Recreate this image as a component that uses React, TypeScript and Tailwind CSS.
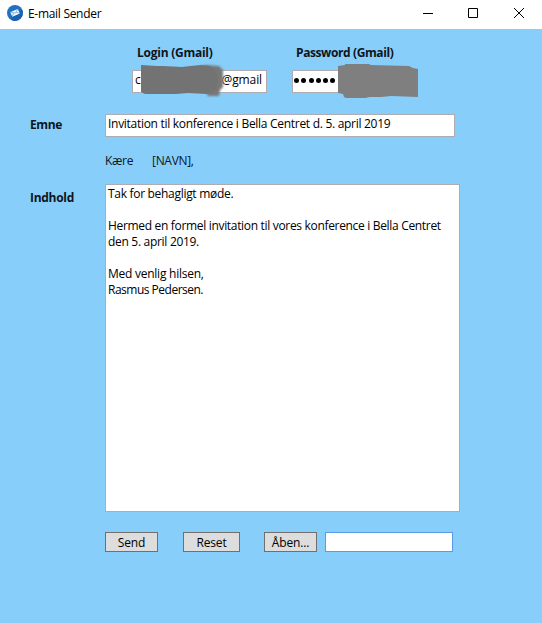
const body = [
  { text: 'Tak for behagligt møde.', spacing: 'tracking-[-0.3px]' },
  { text: '', spacing: '' },
  { text: 'Hermed en formel invitation til vores konference i Bella Centret', spacing: 'tracking-[-0.32px]' },
  { text: 'den 5. april 2019.', spacing: 'tracking-[-0.3px]' },
  { text: '', spacing: '' },
  { text: 'Med venlig hilsen,', spacing: 'tracking-[-0.25px]' },
  { text: 'Rasmus Pedersen.', spacing: 'tracking-[-0.5px]' },
];

function TitleBar() {
  return (
    <header className="flex h-[29px] items-start bg-white">
      <svg className="ml-[7px] mt-[5px] size-4" viewBox="0 0 16 16">
        <circle cx="8" cy="8" r="8" fill="#2272c3" />
        <path d="M15.2 5A8 8 0 0 1 6 15.700L3.500 11.500l9-6z" fill="#1b60ae" />
        <path d="m3.300 7.300 7.400-3.400 2.200 4.500-7.600 3.400z" fill="#f4f8fc" />
        <path d="m3.600 7.500 4.900.5 2.200-3.700M5.300 11.400l1.300-3.300M12.500 8.400 9.200 7.200" fill="none" stroke="#5d9bd5" strokeWidth=".7" />
      </svg>
      <h1 className="ml-[5px] mt-[6px] text-[12px] leading-4 tracking-[-0.3px] text-black">E-mail Sender</h1>
      <div className="ml-auto flex h-[29px]" aria-hidden="true">
        <svg width="119" height="29" viewBox="0 0 119 29" fill="none" stroke="#000" strokeWidth="1">
          <path d="M0 13.5h10M45.500 8.500h9v9h-9zM91 8l10 10M101 8 91 18" />
        </svg>
      </div>
    </header>
  );
}

function Credentials() {
  return (
    <div className="flex pl-[132px]">
      <div className="w-[160px]">
        <div className="ml-[5px] h-4 font-bold tracking-[-0.25px]">Login (Gmail)</div>
        <div className="relative mt-[9px] flex h-[23px] w-[135px] border border-[#abadb3] bg-white text-black">
          <span className="ml-[2px] mt-[1px]">c</span>
          <span className="ml-auto mr-[4px] mt-[1px] tracking-[-0.1px]">@gmail</span>
          <svg className="absolute left-[7px] top-[-8px]" width="92" height="38" viewBox="0 0 92 38">
            <defs>
              <filter id="soft" x="-20%" y="-20%" width="140%" height="140%">
                <feGaussianBlur stdDeviation="1.2" />
              </filter>
            </defs>
            <path d="M60 3 66 2 79 3 83 7 83 24 80 27 79 33 68 33 66 29 60 28Z" fill="#777" filter="url(#soft)" />
            <path d="M1 2 17 3 23 3 42 4 50 3 61 2 70 3 76 8 78 18 75 28 67 31 48 30 36 31 5 31 1 29Z" fill="#737373" />
          </svg>
        </div>
      </div>
      <div>
        <div className="ml-[4px] h-4 font-bold tracking-[-0.4px]">Password (Gmail)</div>
        <div className="relative mt-[9px] h-[23px] w-[120px] border border-[#abadb3] bg-white">
          <div className="flex gap-[2px] pl-[1px] pt-[7px]">
            {[0, 1, 2, 3, 4, 5, 6].map((i) => (
              <span key={i} className="mr-[0.3px] size-[5px] shrink-0 rounded-full bg-black" />
            ))}
          </div>
          <svg className="absolute left-[45px] top-[-8px]" width="81" height="36" viewBox="0 0 81 36">
            <path d="M0 3 7 2V1h24l2 1 38 1 4 2 5 1v28l-27-1-10 1H32l-5 1H8l-2-1-1-3-5-1Z" fill="#7f7f7f" />
          </svg>
        </div>
      </div>
    </div>
  );
}

const button = 'flex h-[20px] items-center justify-center border border-[#707070] bg-[#dddddd] pt-px text-black tracking-[-0.15px]';

export default function App() {
  return (
    <div className="h-[623px] w-[542px] overflow-hidden bg-[#87cefa] font-['Open_Sans','Noto_Sans',sans-serif] text-[12px] leading-4 text-[#10151a]">
      <TitleBar />
      <main className="pt-4">
        <Credentials />
        <div className="mt-[21px] flex">
          <label className="w-[105px] pl-[30px] pt-[3px] font-bold tracking-[-0.4px]">Emne</label>
          <div className="h-[23px] w-[350px] border border-[#abadb3] bg-white pl-[2px] pt-[1px] tracking-[-0.29px] text-black">
            Invitation til konference i Bella Centret d. 5. april 2019
          </div>
        </div>
        <div className="mt-4 flex h-4 pl-[105px] tracking-[-0.3px]">
          <span className="w-[47px]">Kære</span>
          <span>[NAVN],</span>
        </div>
        <div className="mt-[15px] flex">
          <label className="w-[105px] pl-[30px] pt-[6px] font-bold tracking-[-0.3px]">Indhold</label>
          <div className="h-[328px] w-[355px] border border-[#abadb3] bg-white pl-[2px] pt-[1px] text-black">
            {body.map((line, i) => (
              <p key={i} className={`h-4 whitespace-nowrap ${line.spacing}`}>{line.text}</p>
            ))}
          </div>
        </div>
        <div className="mt-5 flex pl-[105px]">
          <button className={`${button} w-[53px]`}>Send</button>
          <button className={`${button} ml-[25px] w-[57px]`}>Reset</button>
          <button className={`${button} ml-[24px] w-[53px]`}>Åben...</button>
          <div className="ml-2 h-[20px] w-[128px] border border-[#569de5] bg-white" />
        </div>
      </main>
    </div>
  );
}
